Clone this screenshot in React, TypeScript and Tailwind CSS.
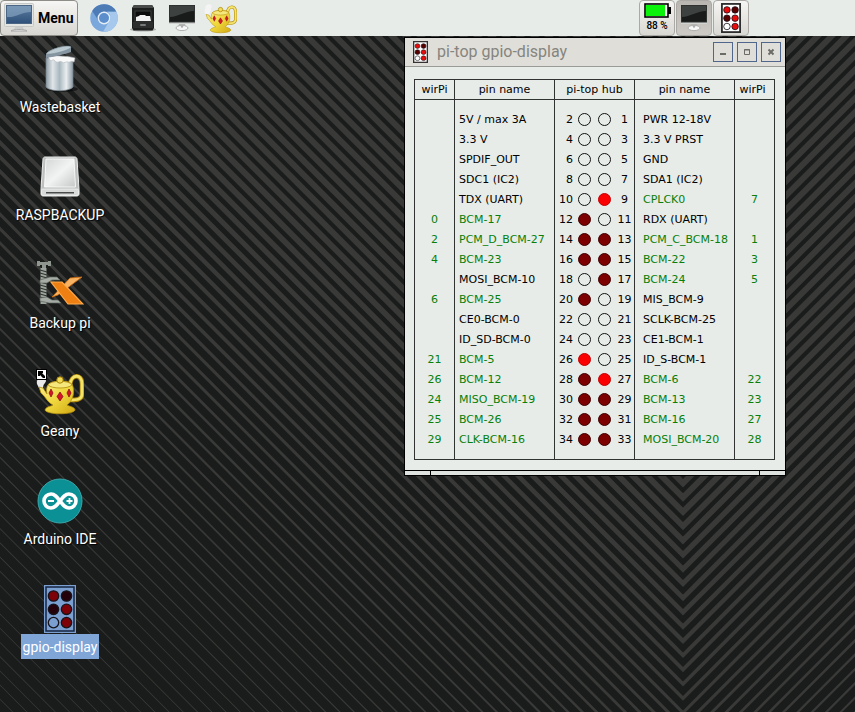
import React from "react";

const label = "font-['Roboto',sans-serif]";

type Led = "off" | "dark" | "on";

type PinRow = {
  lw?: string;
  left: string;
  a: Led;
  b: Led;
  right: string;
  rw?: string;
  lg?: boolean;
  rg?: boolean;
};

const rows: PinRow[] = [
  { left: "5V / max 3A", a: "off", b: "off", right: "PWR 12-18V" },
  { left: "3.3 V", a: "off", b: "off", right: "3.3 V PRST" },
  { left: "SPDIF_OUT", a: "off", b: "off", right: "GND" },
  { left: "SDC1 (IC2)", a: "off", b: "off", right: "SDA1 (IC2)" },
  { left: "TDX (UART)", a: "off", b: "on", right: "CPLCK0", rw: "7", rg: true },
  { lw: "0", left: "BCM-17", lg: true, a: "dark", b: "off", right: "RDX (UART)" },
  { lw: "2", left: "PCM_D_BCM-27", lg: true, a: "dark", b: "dark", right: "PCM_C_BCM-18", rg: true, rw: "1" },
  { lw: "4", left: "BCM-23", lg: true, a: "dark", b: "dark", right: "BCM-22", rg: true, rw: "3" },
  { left: "MOSI_BCM-10", a: "off", b: "dark", right: "BCM-24", rg: true, rw: "5" },
  { lw: "6", left: "BCM-25", lg: true, a: "dark", b: "off", right: "MIS_BCM-9" },
  { left: "CE0-BCM-0", a: "off", b: "off", right: "SCLK-BCM-25" },
  { left: "ID_SD-BCM-0", a: "off", b: "off", right: "CE1-BCM-1" },
  { lw: "21", left: "BCM-5", lg: true, a: "on", b: "off", right: "ID_S-BCM-1" },
  { lw: "26", left: "BCM-12", lg: true, a: "dark", b: "on", right: "BCM-6", rg: true, rw: "22" },
  { lw: "24", left: "MISO_BCM-19", lg: true, a: "dark", b: "dark", right: "BCM-13", rg: true, rw: "23" },
  { lw: "25", left: "BCM-26", lg: true, a: "dark", b: "dark", right: "BCM-16", rg: true, rw: "27" },
  { lw: "29", left: "CLK-BCM-16", lg: true, a: "dark", b: "dark", right: "MOSI_BCM-20", rg: true, rw: "28" },
];

// Each stripe falls at 45 degrees to the centre line and thins out towards the lower left.
const stripes: string[] = [];
for (let k = -50; k <= 56; k++) {
  const tip = 700.7 + 14.21 * k;
  const band = (x: number, y: number) => {
    const d = Math.max(0, 660 - y + 0.73 * x);
    return Math.min(8.5, 1 + 0.000018 * d * d);
  };
  const pts = [0, 100, 200, 300, 400, 500, 600, 683].map((x) => {
    const y = tip - (683 - x);
    return { x, y, w: band(x, y) };
  });
  const down = pts.map((p) => `${p.x},${p.y.toFixed(1)}`);
  const back = [...pts].reverse().map((p) => `${p.x},${(p.y - p.w).toFixed(1)}`);
  stripes.push([...down, ...back].join(" "));
}

function Wallpaper() {
  return (
    <svg className="absolute top-0 left-0" width="1366" height="768" viewBox="0 0 1366 768" aria-hidden="true">
      <defs>
        <g id="half">
          {stripes.map((p, i) => (
            <polygon key={i} points={p} fill="#393938" />
          ))}
        </g>
      </defs>
      <rect width="1366" height="768" fill="#191c1a" />
      <use href="#half" />
      <use href="#half" transform="translate(1366 0) scale(-1 1)" />
    </svg>
  );
}

function MenuComputerIcon() {
  return (
    <svg width="30" height="30" viewBox="0 0 30 30" aria-hidden="true">
      <defs>
        <linearGradient id="scr" x1="0" y1="0" x2="0" y2="1">
          <stop offset="0" stopColor="#5d7fa3" />
          <stop offset="1" stopColor="#2f5078" />
        </linearGradient>
      </defs>
      <rect x="0.5" y="0.5" width="29" height="23" rx="1" fill="#e3e5e3" stroke="#c6c8c6" />
      <rect x="2.5" y="2.5" width="25" height="18" fill="url(#scr)" stroke="#4b6685" />
      <path d="M3 3h24v6C18 9 11 15 3 14z" fill="#8aa6c2" opacity="0.65" />
      <path d="M11 24h8l1 3h-10z" fill="#c9cbca" />
      <path d="M7 28c2-2 14-2 16 0z" fill="#f6f6f6" stroke="#999" strokeWidth="0.8" />
    </svg>
  );
}

function ChromiumIcon() {
  return (
    <svg width="28" height="28" viewBox="0 0 28 28" aria-hidden="true">
      <circle cx="14" cy="14" r="13.8" fill="#7aa8dc" />
      <path d="M2.2 7A13.8 13.8 0 0 1 26.300 7.700H14a6.300 6.300 0 0 0-6 8z" fill="#4c7bb5" />
      <path d="M26.300 7.700A13.800 13.800 0 0 1 13 27.800l6.500-11A6.300 6.300 0 0 0 17 7.700z" fill="#a6c8ec" />
      <circle cx="14" cy="14" r="6.400" fill="#e3edf8" />
      <circle cx="14" cy="14" r="5" fill="#5b8ecb" />
    </svg>
  );
}

function CabinetIcon() {
  return (
    <svg width="28" height="28" viewBox="0 0 28 28" aria-hidden="true">
      <ellipse cx="14" cy="25.500" rx="13" ry="2" fill="#aeb1af" />
      <path d="M5 1h18l2 3v20l-1.500 2.500h-19L3 24V4z" fill="#1d1e1e" />
      <path d="M5 1h18l2 3H3z" fill="#494b4b" />
      <rect x="6" y="7" width="16" height="10" fill="#0c0c0c" stroke="#3a3c3c" />
      <path d="M7 13l3-1 1-1h5l1 1h4l1 5H7z" fill="#f1f1f1" />
      <path d="M4 18h20v6H4z" fill="#2c2e2e" />
      <rect x="11" y="20" width="6" height="2" rx="1" fill="#777a7a" />
    </svg>
  );
}

function MonitorIcon() {
  return (
    <svg width="28" height="28" viewBox="0 0 28 28" aria-hidden="true">
      <rect x="1" y="1" width="26" height="19" fill="#d2d4d2" />
      <rect x="1.500" y="1.500" width="25" height="16.500" fill="#191b1b" stroke="#303232" />
      <path d="M2 2h24v5C17 7 10 13 2 13z" fill="#3d413f" />
      <path d="M11 20h6l1 3h-8z" fill="#b5b7b5" />
      <ellipse cx="14" cy="24" rx="6" ry="2.600" fill="#f7f7f7" stroke="#b0b2b0" />
      <circle cx="14" cy="22.500" r="1.200" fill="#aaa" />
    </svg>
  );
}

function Teapot({ size }: { size: number }) {
  return (
    <svg width={size} height={size} viewBox="0 0 48 48" aria-hidden="true">
      <defs>
        <linearGradient id="gold" x1="0" x2="1" y1="0" y2="1">
          <stop offset="0" stopColor="#f9ee96" />
          <stop offset="0.500" stopColor="#f0d93f" />
          <stop offset="1" stopColor="#d2a812" />
        </linearGradient>
      </defs>
      <path d="M1 15c-1-4 2-5 1-8 1-4 7-5 9-2 1 3-2 4-1 7-1 3-3 3-3 7H3z" fill="#f4f4f4" opacity="0.950" />
      <path d="M34 16C35 5 46 4 46 15v10c0 6-6 6-12 6" fill="none" stroke="#b48a08" strokeWidth="4.500" />
      <path d="M34 16C35 5 46 4 46 15v10c0 6-6 6-12 6" fill="none" stroke="#f3e36b" strokeWidth="2.800" />
      <path d="M9 41c1-4 8-4 8-5-6-3-7-8-12-12L3 18l4 1 4 6c-1-5 0-9 2-10 6-4 18-4 23 0 3 6 2 16-5 21 1 1 8 2 8 5-2 5-28 5-30 0z" fill="url(#gold)" stroke="#b8930f" strokeWidth="0.800" />
      <path d="M12 16c2-5 22-5 24 0-4 4-20 4-24 0z" fill="#f5e77c" stroke="#b08b0b" strokeWidth="0.800" />
      <circle cx="24" cy="11" r="3.200" fill="#f1dd55" stroke="#a98307" />
      <path d="M15 20l2 4-2 4-2-4zM24 23l3 4.500-3 4.500-3-4.500zM33 20l2 4-2 4-2-4z" fill="#d5152a" stroke="#7d0a16" strokeWidth="0.700" />
    </svg>
  );
}

function BatteryIcon() {
  return (
    <svg width="27" height="16" viewBox="0 0 27 16" aria-hidden="true">
      <rect x="1" y="1" width="23" height="13" fill="#fff" stroke="#000" strokeWidth="1.600" />
      <rect x="2" y="2" width="19" height="11" fill="#0bf20b" />
      <rect x="24" y="4" width="3" height="7" fill="#000" />
    </svg>
  );
}

function GpioIcon({ w, h, selected }: { w: number; h: number; selected?: boolean }) {
  const red = selected ? "#7d0008" : "#e80c0c";
  const dark = selected ? "#23000a" : "#580000";
  const paper = selected ? "#7a9fd0" : "#fff";
  const fills = [red, dark, dark, red, paper, red];
  return (
    <svg width={w} height={h} viewBox="0 0 32 48" preserveAspectRatio="none" aria-hidden="true">
      <rect width="32" height="48" fill={selected ? "#7a9fd0" : "#333"} />
      <rect x="2" y="2" width="28" height="44" fill={paper} stroke={selected ? "#16253f" : "#222"} strokeWidth="1.500" />
      {fills.map((f, i) => (
        <circle key={i} cx={i % 2 ? 22.5 : 9.5} cy={11 + Math.floor(i / 2) * 13.3} r="5.200" fill={f} stroke="#17141b" strokeWidth="1.300" />
      ))}
    </svg>
  );
}

function TrashIcon() {
  return (
    <svg width="48" height="48" viewBox="0 0 48 48" aria-hidden="true">
      <defs>
        <linearGradient id="bin" x1="0" x2="1">
          <stop offset="0" stopColor="#8e9ca6" />
          <stop offset="0.250" stopColor="#e0e6e9" />
          <stop offset="0.500" stopColor="#aab7bf" />
          <stop offset="0.750" stopColor="#e9eef0" />
          <stop offset="1" stopColor="#8997a1" />
        </linearGradient>
      </defs>
      <ellipse cx="26" cy="44" rx="16" ry="3" fill="#000" opacity="0.500" />
      <path d="M10 13h27v29c-4 5-23 5-27 0z" fill="url(#bin)" stroke="#74828c" strokeWidth="0.700" />
      <path d="M12 12c8-2 20-1 27 1l-1 4c-3-2-4 1-6 0s-4 2-6 0-5 2-7-1-3 1-5-1z" fill="#f8f8f8" stroke="#b3b9bd" strokeWidth="0.600" />
      <path d="M10 9C13 4 32-1 35 2v5C30 9 16 12 10 13z" fill="#8596a2" />
      <path d="M10 9C13 4 32-1 35 2c0 3-19 8-25 7z" fill="#bac8d0" stroke="#77868f" strokeWidth="0.600" />
    </svg>
  );
}

function DriveIcon() {
  return (
    <svg width="48" height="48" viewBox="0 0 48 48" aria-hidden="true">
      <defs>
        <linearGradient id="drv" x1="0" x2="1" y1="0" y2="1">
          <stop offset="0" stopColor="#d4d5d5" />
          <stop offset="0.500" stopColor="#f2f3f3" />
          <stop offset="1" stopColor="#c5c7c7" />
        </linearGradient>
      </defs>
      <path d="M9 4h30c1 0 2 1 2 2l2 30v5c0 1-1 2-2 2H7c-1 0-2-1-2-2v-5L7 6c0-1 1-2 2-2z" fill="#bec0c0" stroke="#e9eaea" />
      <path d="M10 6h28l1.500 28h-31z" fill="url(#drv)" stroke="#fff" strokeWidth="0.800" />
      <rect x="5.500" y="36" width="37" height="6.500" rx="1.500" fill="#d8dada" stroke="#f4f4f4" strokeWidth="0.700" />
      <path d="M10 39h28v1.500H10z" fill="#4a4c4c" />
    </svg>
  );
}

function BackupIcon() {
  return (
    <svg width="48" height="48" viewBox="0 0 48 48" aria-hidden="true">
      <path d="M1 0h3v1h8V0h3v5h-3V4h-2v3H6V4H4v1H1z" fill="#8f9690" />
      <path d="M7.500 7v36" stroke="#9da49e" strokeWidth="6" />
      <path d="M4 9l7 2M4 12l7 2M4 15l7 2M4 21l7 2M4 24l7 2M4 27l7 2M4 30l7 2M4 33l7 2M4 36l7 2" stroke="#303530" strokeWidth="1.200" />
      <path d="M4 19l10-3h7l3 3h-8l-5 3H4zM4 37l7-1 5 3h6l3 3H13l-9-2z" fill="#a5aca6" stroke="#5f6660" strokeWidth="0.700" />
      <path d="M46 16L22 34l-6 2 18-19z" fill="#f8b263" stroke="#d06a08" strokeWidth="0.800" />
      <path d="M15 21h11l21 22H32z" fill="#ee7f12" stroke="#ffab4d" strokeWidth="1.200" />
    </svg>
  );
}

function ArduinoIcon() {
  return (
    <svg width="48" height="48" viewBox="0 0 48 48" aria-hidden="true">
      <circle cx="24" cy="24" r="22" fill="#0b9096" stroke="#3aa9ad" />
      <path d="M24 24c-3-4-5-7-9-7a7 7 0 0 0 0 14c4 0 6-3 9-7s5-7 9-7a7 7 0 0 1 0 14c-4 0-6-3-9-7z" fill="none" stroke="#fff" strokeWidth="3.600" />
      <path d="M12 24h6M30.500 24h6M33.500 21v6" stroke="#fff" strokeWidth="1.800" />
    </svg>
  );
}

function DesktopItem({ name, selected, children }: { name: string; selected?: boolean; children: React.ReactNode }) {
  return (
    <button type="button" className="flex h-[108px] w-[120px] shrink-0 flex-col items-center gap-px">
      <span className="relative flex h-12 w-12 items-center justify-center">{children}</span>
      <span
        className={`h-[25px] px-0.5 text-[14px] leading-[26px] whitespace-nowrap text-white ${label} ${
          selected ? "bg-[#80a6d8]" : "[text-shadow:1px_1px_1px_#000]"
        }`}
      >
        {name}
      </span>
    </button>
  );
}

function Launcher({ name, children }: { name: string; children: React.ReactNode }) {
  return (
    <button type="button" aria-label={name} className="flex h-9 w-[39px] items-center justify-center">
      {children}
    </button>
  );
}

const trayButton = "flex h-9 w-[36px] flex-col items-center justify-center rounded-[4px] border border-[#aaa9a5]";

function Taskbar() {
  return (
    <header className="relative flex h-9 w-full items-center bg-[#e8ece9]">
      <button
        type="button"
        className={`mr-1.5 flex h-9 w-[78px] items-center gap-1 rounded-[4px] border border-[#8f8d88] bg-linear-to-b from-[#f6f6f4] to-[#d8d6d1] pl-[3px] text-[14px] font-bold text-black ${label}`}
      >
        <MenuComputerIcon />
        Menu
      </button>
      <Launcher name="Web browser"><ChromiumIcon /></Launcher>
      <Launcher name="File manager"><CabinetIcon /></Launcher>
      <Launcher name="Terminal"><MonitorIcon /></Launcher>
      <Launcher name="Geany"><Teapot size={33} /></Launcher>
      <div className="mr-[106px] ml-auto flex gap-px">
        <button type="button" className={`${trayButton} bg-linear-to-b from-[#f5f5f3] to-[#dad8d3]`}>
          <BatteryIcon />
          <span className={`text-[10px] leading-[14px] font-medium text-black ${label}`}>88 %</span>
        </button>
        <button type="button" aria-label="Desktop" className={`${trayButton} bg-linear-to-b from-[#b9b6b1] to-[#cecbc6]`}>
          <MonitorIcon />
        </button>
        <button type="button" aria-label="gpio-display" className={`${trayButton} bg-linear-to-b from-[#f5f5f3] to-[#dad8d3]`}>
          <GpioIcon w={20} h={30} />
        </button>
      </div>
    </header>
  );
}

function LedDot({ state }: { state: Led }) {
  const look =
    state === "on"
      ? "border-[#c40000] bg-[#fb0000]"
      : state === "dark"
        ? "border-[#3d0000] bg-[#7d0000]"
        : "border-[#101010] bg-transparent";
  return <span className={`h-[13px] w-[13px] rounded-full border ${look}`} />;
}

const winButton = "flex h-5 w-5 items-center justify-center border border-[#50668a] text-[#6b6b68]";
const line = "border-[#303331]";

function GpioWindow() {
  return (
    <section className="absolute top-[37px] left-[404px] border border-black bg-[#e7ece9]">
      <div className="flex h-[29px] items-center border-b border-[#999b98] bg-[#e0ded8] pr-1 pl-2">
        <GpioIcon w={15} h={22} />
        <h1 className={`ml-[9px] grow text-[16px] leading-5 font-normal text-[#85857f] ${label}`}>pi-top gpio-display</h1>
        <div className="flex gap-1">
          <button type="button" aria-label="Minimize" className={winButton}>
            <svg width="8" height="8"><path d="M1 6h6" stroke="currentColor" strokeWidth="2" /></svg>
          </button>
          <button type="button" aria-label="Maximize" className={winButton}>
            <svg width="8" height="8"><path d="M1.500 1.500h5v5h-5zM1 2h6" fill="none" stroke="currentColor" /></svg>
          </button>
          <button type="button" aria-label="Close" className={winButton}>
            <svg width="8" height="8"><path d="M1.500 1.500l5 5M6.500 1.500l-5 5" stroke="currentColor" strokeWidth="2" /></svg>
          </button>
        </div>
      </div>
      <div className="pt-3 pr-2.5 pb-2.5 pl-[9px]">
        <table className={`w-[361px] table-fixed border-separate border-spacing-0 border-r border-b font-['DejaVu_Sans',sans-serif] text-[11px] leading-[19px] text-black ${line}`}>
          <thead>
            <tr>
              {[
                ["wirPi", "w-[40px]"],
                ["pin name", "w-[100px]"],
                ["pi-top hub", "w-[80px]"],
                ["pin name", "w-[100px]"],
                ["wirPi", "w-[40px] pr-1"],
              ].map(([t, w], i) => (
                <th key={i} scope="col" className={`h-[21px] border-y border-l p-0 text-center font-normal whitespace-nowrap ${w} ${line}`}>
                  {t}
                </th>
              ))}
            </tr>
          </thead>
          <tbody>
            {rows.map((r, i) => {
              const edge = i === 0 ? "pt-[9px]" : i === rows.length - 1 ? "pb-[10px]" : "";
              const cell = `border-l p-0 ${edge} ${line}`;
              return (
                <tr key={i}>
                  <td className={`${cell} text-center text-[#087f08]`}>{r.lw}</td>
                  <td className={`${cell} ${r.lg ? "text-[#087f08]" : ""}`}><span className="pl-1 whitespace-nowrap">{r.left}</span></td>
                  <td className={cell}>
                    <div className="flex h-5 items-center">
                      <span className="w-[18px] text-right">{i * 2 + 2}</span>
                      <span className="mx-[5px] flex gap-[7px]"><LedDot state={r.a} /><LedDot state={r.b} /></span>
                      <span className="w-[17px] text-center">{i * 2 + 1}</span>
                    </div>
                  </td>
                  <td className={`${cell} ${r.rg ? "text-[#087f08]" : ""}`}><span className="pl-2 whitespace-nowrap">{r.right}</span></td>
                  <td className={`${cell} text-center text-[#087f08]`}>{r.rw}</td>
                </tr>
              );
            })}
          </tbody>
        </table>
      </div>
      <div className="flex h-[5px] justify-between border-t border-black bg-[#dfe3e0]">
        <span className="w-[26px] border-r border-black" />
        <span className="w-[26px] border-l border-black" />
      </div>
    </section>
  );
}

export default function App() {
  return (
    <main className="relative min-h-screen overflow-hidden bg-[#191c1a]">
      <Wallpaper />
      <Taskbar />
      <nav aria-label="Desktop" className="relative flex w-[120px] flex-col pt-[9px]">
        <DesktopItem name="Wastebasket"><TrashIcon /></DesktopItem>
        <DesktopItem name="RASPBACKUP"><DriveIcon /></DesktopItem>
        <DesktopItem name="Backup pi"><BackupIcon /></DesktopItem>
        <DesktopItem name="Geany">
          <Teapot size={48} />
          <svg className="absolute top-0 left-0" width="11" height="11" viewBox="0 0 11 11" aria-hidden="true">
            <rect x="0.500" y="0.500" width="10" height="10" fill="#fff" stroke="#000" />
            <path d="M2 2h5v2H6l3 3v2H7L4 6v1H2z" fill="#000" />
          </svg>
        </DesktopItem>
        <DesktopItem name="Arduino IDE"><ArduinoIcon /></DesktopItem>
        <DesktopItem name="gpio-display" selected><GpioIcon w={32} h={48} selected /></DesktopItem>
      </nav>
      <GpioWindow />
    </main>
  );
}
